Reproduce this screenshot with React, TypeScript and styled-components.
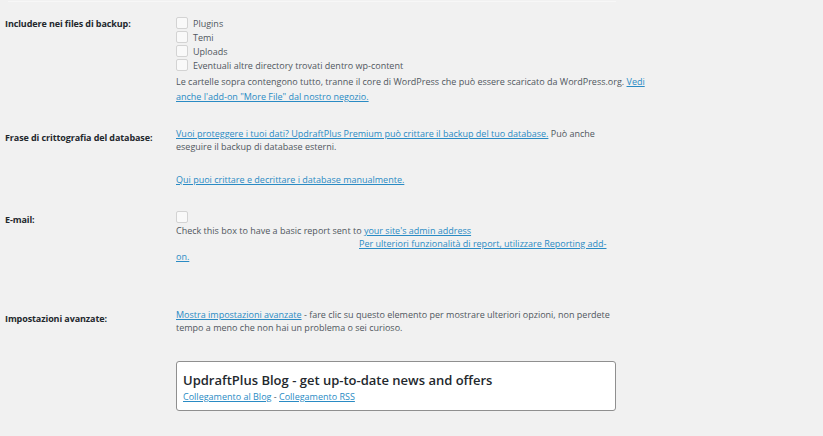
import React from 'react';
import styled, { createGlobalStyle } from 'styled-components';

const GlobalStyle = createGlobalStyle`
  html, body {
    margin: 0;
    padding: 0;
    background: #f1f1f1;
  }
  body {
    font-family: 'Open Sans', 'Noto Sans', sans-serif;
    color: #50575e;
    font-size: 9px;
  }
`;

const Page = styled.div`
  width: 823px;
  height: 436px;
  overflow: hidden;
  background: #f1f1f1;
`;

const TopRule = styled.div`
  margin: 1px 0 0 8px;
  width: 608px;
  height: 1px;
  background: #f7f7f7;
`;

const Row = styled.div<{ $top: number }>`
  display: grid;
  grid-template-columns: 171px auto;
  padding-left: 5px;
  margin-top: ${(p) => p.$top}px;
`;

const Label = styled.div<{ $offset: number }>`
  font-weight: 700;
  color: #23282d;
  font-size: 9px;
  line-height: 13px;
  letter-spacing: -0.1px;
  padding-top: ${(p) => p.$offset}px;
`;

const Content = styled.div<{ $width: number }>`
  width: ${(p) => p.$width}px;
  font-size: 9px;
  line-height: 13px;
  color: #50575e;
`;

const CheckRow = styled.label`
  display: flex;
  align-items: center;
  gap: 5px;
  height: 14px;
  color: #50575e;
`;

const Box = styled.span`
  display: inline-block;
  width: 10px;
  height: 10px;
  border: 1px solid #d3d3d3;
  border-radius: 2px;
  background: #f9f9f9;
  box-sizing: content-box;
  flex: none;
`;

const Para = styled.p<{ $top?: number; $lh?: number }>`
  margin: ${(p) => p.$top ?? 0}px 0 0 0;
  line-height: ${(p) => p.$lh ?? 13}px;
`;

const Link = styled.a`
  color: #2a8bc4;
  text-decoration: underline;
  cursor: pointer;
`;

const Spacer = styled.span<{ $w: number }>`
  display: inline-block;
  width: ${(p) => p.$w}px;
`;

const Widget = styled.div`
  margin: 27px 0 0 176px;
  width: 428px;
  height: 48px;
  padding: 0 4px 0 6px;
  background: #fff;
  border: 1px solid #8f8f8f;
  border-radius: 3px;
`;

const WidgetTitle = styled.h3`
  margin: 9px 0 0 0;
  font-size: 13px;
  line-height: 18px;
  font-weight: 600;
  color: #23282d;
`;

const WidgetLinks = styled.div`
  margin-top: 1px;
  font-size: 9px;
  line-height: 13px;
  color: #50575e;
`;

function App(): JSX.Element {
  return (
    <Page>
      <GlobalStyle />
      <TopRule />

      <Row $top={14}>
        <Label $offset={1}>Includere nei files di backup:</Label>
        <Content $width={480}>
          <CheckRow><Box />Plugins</CheckRow>
          <CheckRow><Box />Temi</CheckRow>
          <CheckRow><Box />Uploads</CheckRow>
          <CheckRow><Box />Eventuali altre directory trovati dentro wp-content</CheckRow>
          <Para $top={2} $lh={15}>
            Le cartelle sopra contengono tutto, tranne il core di WordPress che può essere
            scaricato da WordPress.org. <Link>Vedi anche l'add-on "More File" dal nostro negozio.</Link>
          </Para>
        </Content>
      </Row>

      <Row $top={23}>
        <Label $offset={4}>Frase di crittografia del database:</Label>
        <Content $width={440}>
          <Para>
            <Link>Vuoi proteggere i tuoi dati? UpdraftPlus Premium può crittare il backup del tuo database.</Link>{' '}
            Può anche eseguire il backup di database esterni.
          </Para>
          <Para $top={20}>
            <Link>Qui puoi crittare e decrittare i database manualmente.</Link>
          </Para>
        </Content>
      </Row>

      <Row $top={24}>
        <Label $offset={3}>E-mail:</Label>
        <Content $width={440}>
          <CheckRow><Box /></CheckRow>
          <Para>
            Check this box to have a basic report sent to <Link>your site's admin address</Link>
          </Para>
          <Para>
            <Spacer $w={183} />
            <Link>Per ulteriori funzionalità di report, utilizzare Reporting add-on.</Link>
          </Para>
        </Content>
      </Row>

      <Row $top={45}>
        <Label $offset={4}>Impostazioni avanzate:</Label>
        <Content $width={440}>
          <Para>
            <Link>Mostra impostazioni avanzate</Link> - fare clic su questo elemento per mostrare
            ulteriori opzioni, non perdete tempo a meno che non hai un problema o sei curioso.
          </Para>
        </Content>
      </Row>

      <Widget>
        <WidgetTitle>UpdraftPlus Blog - get up-to-date news and offers</WidgetTitle>
        <WidgetLinks>
          <Link>Collegamento al Blog</Link> - <Link>Collegamento RSS</Link>
        </WidgetLinks>
      </Widget>
    </Page>
  );
}

export default App;
